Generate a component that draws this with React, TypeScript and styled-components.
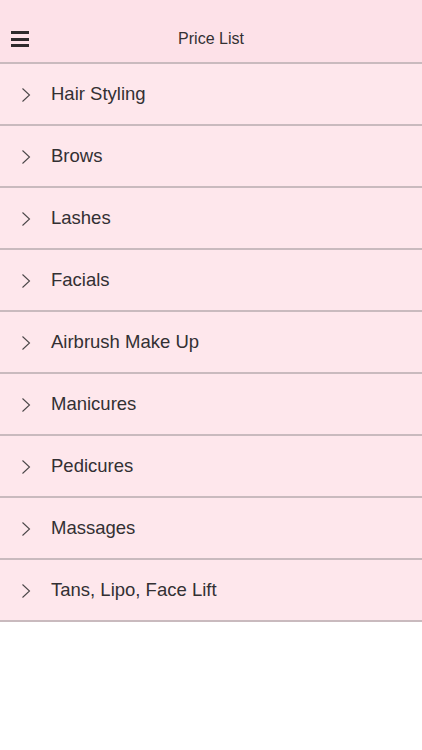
import React from "react";
import styled, { createGlobalStyle } from "styled-components";

const Global = createGlobalStyle`
  html, body { margin: 0; padding: 0; background: #ffffff; }
  body { font-family: "Liberation Sans", Arial, sans-serif; }
`;

const Page = styled.div`
  width: 422px;
  min-height: 750px;
  background: #ffffff;
`;

const Header = styled.header`
  height: 64px;
  box-sizing: border-box;
  padding-top: 16px;
  display: grid;
  grid-template-columns: 50px 1fr 50px;
  align-items: center;
  background: #fde1e8;
  border-bottom: 2px solid #c9babe;
`;

const MenuButton = styled.div`
  display: flex;
  flex-direction: column;
  gap: 3.5px;
  padding-left: 11px;
`;

const Bar = styled.span`
  display: block;
  width: 18px;
  height: 3px;
  background: #2e2a2c;
`;

const Title = styled.h1`
  margin: 0;
  text-align: center;
  font-size: 16px;
  font-weight: 400;
  color: #333033;
  line-height: 20px;
`;

const List = styled.ul`
  list-style: none;
  margin: 0;
  padding: 0;
`;

const Row = styled.li`
  height: 62px;
  box-sizing: border-box;
  display: flex;
  align-items: center;
  background: #fee7ec;
  border-bottom: 2px solid #c9babe;
  padding-left: 21px;
`;

const Chevron = styled.svg`
  width: 10px;
  height: 16px;
  flex: none;
  margin-right: 20px;
  margin-top: 1px;
`;

const Label = styled.span`
  font-size: 18.5px;
  color: #333033;
  line-height: 22px;
`;

const items = [
  "Hair Styling",
  "Brows",
  "Lashes",
  "Facials",
  "Airbrush Make Up",
  "Manicures",
  "Pedicures",
  "Massages",
  "Tans, Lipo, Face Lift",
];

export default function App() {
  return (
    <Page>
      <Global />
      <Header>
        <MenuButton>
          <Bar />
          <Bar />
          <Bar />
        </MenuButton>
        <Title>Price List</Title>
        <div />
      </Header>
      <List>
        {items.map((t) => (
          <Row key={t}>
            <Chevron viewBox="0 0 10 16">
              <path d="M1.5 1.5 L8.5 8 L1.5 14.5" fill="none" stroke="#4a4648" strokeWidth="1.1" />
            </Chevron>
            <Label>{t}</Label>
          </Row>
        ))}
      </List>
    </Page>
  );
}
